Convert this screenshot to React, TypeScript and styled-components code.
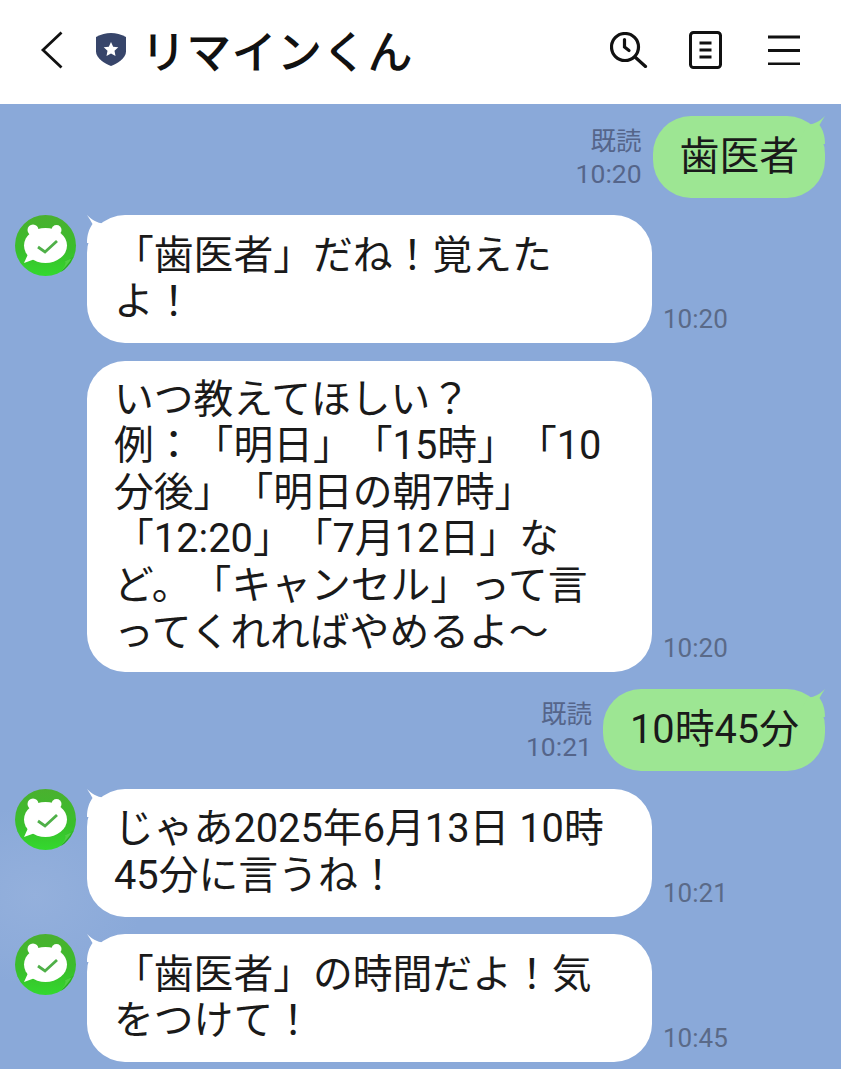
import React, { FC, ReactNode } from "react";
import styled, { createGlobalStyle } from "styled-components";

const GlobalStyle = createGlobalStyle`
  html, body {
    margin: 0;
    padding: 0;
    background: #8aa9d9;
    overflow: hidden;
  }
`;

const Screen = styled.div`
  width: 841px;
  height: 1069px;
  display: flex;
  flex-direction: column;
  overflow: hidden;
  background: radial-gradient(ellipse 110px 90px at 35px 895px, #94b0dc, #8aa9d9 100%);
  font-family: Roboto, "Noto Sans CJK JP", sans-serif;
  text-spacing-trim: space-all;
`;

const Header = styled.header`
  height: 104px;
  flex: none;
  background: #ffffff;
  display: flex;
  align-items: center;
  padding: 0 41px 5px 40px;
  box-sizing: border-box;
`;

const TitleGroup = styled.div`
  display: flex;
  align-items: center;
  flex: 1;
  gap: 14px;
`;

const Title = styled.h1`
  margin: 0;
  font-family: "Noto Sans CJK JP", sans-serif;
  font-size: 45px;
  font-weight: 500;
  line-height: 60px;
  letter-spacing: 0.3px;
  color: #111111;
`;

const HeaderActions = styled.div`
  display: flex;
  align-items: center;
  gap: 41px;
`;

const BackSvg = styled.svg`
  flex: none;
`;

const ShieldSvg = styled.svg`
  flex: none;
  margin-left: 17px;
`;

const Feed = styled.main`
  display: flex;
  flex-direction: column;
  padding: 12px 16px 0 15px;
`;

const Row = styled.div<{ $out?: boolean }>`
  display: flex;
  align-items: flex-end;
  justify-content: ${(p) => (p.$out ? "flex-end" : "flex-start")};
  margin-bottom: 17.5px;
`;

const AvatarSlot = styled.div`
  width: 72px;
  flex: none;
  align-self: flex-start;
  height: 62px;
`;

const Bubble = styled.div<{ $out?: boolean; $long?: boolean }>`
  position: relative;
  box-sizing: border-box;
  font-size: 39.8px;
  line-height: 46.6px;
  color: #1a1a1a;
  white-space: nowrap;
  padding: ${(p) => (p.$long ? "15.8px" : "17.5px")} ${(p) => (p.$out ? "26px 17.5px 27px" : "27px")};
  border-radius: 38px;
  background: ${(p) => (p.$out ? "#9de693" : "#ffffff")};
  ${(p) => (p.$out ? "" : "width: 565px;")}
`;

const BubbleText = styled.div`
  position: relative;
`;

const Tail = styled.svg<{ $out?: boolean }>`
  position: absolute;
  top: 0;
  ${(p) => (p.$out ? "right: 0; transform: scaleX(-1);" : "left: 0;")}
`;

const Stamp = styled.div`
  margin: 0 0 8px 11px;
  font-size: 26px;
  line-height: 32px;
  color: #5a6a88;
`;

const OutMeta = styled.div`
  margin: 0 11px 6px 0;
  text-align: right;
  font-size: 26.500px;
  line-height: 36px;
  color: #55658a;
`;

const ReadMark = styled.div`
  font-family: "Noto Sans CJK JP", sans-serif;
  font-size: 25.500px;
  line-height: 34px;
`;

const BackIcon = () => (
  <BackSvg width="24" height="38" viewBox="0 0 24 38">
    <path d="M21.500 1.500 3 19l18.500 17.500" fill="none" stroke="#111" strokeWidth="2.800" />
  </BackSvg>
);

const ShieldIcon = () => (
  <ShieldSvg width="32" height="35" viewBox="0 0 32 35">
    <path d="M1 5C6 2.500 11 1 16 1s10 1.500 15 4v14.500C31 26.500 22 31.500 16 34 10 31.500 1 26.500 1 19.500z" fill="#37456a" />
    <path d="m16 10 2.200 4.700 5.100.6-3.800 3.500 1 5.100-4.500-2.500-4.500 2.500 1-5.100-3.800-3.500 5.100-.6z" fill="#fff" />
  </ShieldSvg>
);

const ClockSearchIcon = () => (
  <svg width="38" height="36" viewBox="0 0 38 36" fill="none" stroke="#111" strokeWidth="3.200" strokeLinecap="round">
    <circle cx="15" cy="15" r="13.500" />
    <path d="M14.500 7.500v7.500l4.500 3.500" />
    <path d="m25 25 10.500 9.500" />
  </svg>
);

const MemoIcon = () => (
  <svg width="33" height="38" viewBox="0 0 33 38" fill="none" stroke="#111" strokeWidth="3" strokeLinejoin="round">
    <rect x="1.500" y="1.500" width="30" height="35" rx="3" />
    <path d="M10.500 12h12M10.500 19h12M10.500 26h12" />
  </svg>
);

const MenuIcon = () => (
  <svg width="37" height="30" viewBox="0 0 37 30" fill="none" stroke="#111" strokeWidth="3">
    <path d="M5 2h32M5 15.500h32M5 29h32" />
  </svg>
);

const BotAvatar: FC<{ id: string }> = ({ id }) => (
  <svg width="62" height="62" viewBox="0 0 62 62">
    <defs>
      <linearGradient id={id} x1="0" y1="0" x2="0" y2="1">
        <stop offset="0" stopColor="#4ab02f" />
        <stop offset="0.6" stopColor="#39bf2b" />
        <stop offset="1" stopColor="#33d92e" />
      </linearGradient>
    </defs>
    <circle cx="30.500" cy="30.500" r="30.500" fill={`url(#${id})`} />
    <circle cx="18" cy="15" r="5.500" fill="#fff" />
    <circle cx="41.500" cy="15" r="5" fill="#fff" />
    <ellipse cx="30.500" cy="30.500" rx="21.500" ry="17.500" fill="#fff" />
    <path d="m9 48 11-4-6-7z" fill="#fff" />
    <path d="m23 32 7 5 12-11" fill="none" stroke="#4fb048" strokeWidth="2.800" />
    <path d="M46 57c5-3 9-8 12-15-3 2-5 3-8 4 1 4-1 8-4 11z" fill="#2aa526" />
    <path d="M46 56c3-3 5-7 4-10 3-1 5-2 7-3-3 5-7 10-11 13z" fill="#4fd042" />
  </svg>
);

const BubbleTail: FC<{ out?: boolean; fill: string }> = ({ out, fill }) => (
  <Tail $out={out} width="28" height="28" viewBox="0 0 28 28">
    <path
      d="M0 0C2 3 4 6 5.500 9 2 14 0 20 0 28h28L17 8.500C10 8.500 4 4 0 0z"
      fill={fill}
    />
  </Tail>
);

interface IncomingProps {
  readonly avatarId?: string;
  readonly long?: boolean;
  readonly time: string;
  readonly children: ReactNode;
}

const Incoming: FC<IncomingProps> = ({ avatarId, long, time, children }) => (
  <Row>
    <AvatarSlot>{avatarId && <BotAvatar id={avatarId} />}</AvatarSlot>
    <Bubble $long={long}>
      {avatarId && <BubbleTail fill="#ffffff" />}
      <BubbleText>{children}</BubbleText>
    </Bubble>
    <Stamp>{time}</Stamp>
  </Row>
);

const Outgoing: FC<{ time: string; children: ReactNode }> = ({ time, children }) => (
  <Row $out>
    <OutMeta>
      <ReadMark>既読</ReadMark>
      {time}
    </OutMeta>
    <Bubble $out>
      <BubbleTail out fill="#9de693" />
      <BubbleText>{children}</BubbleText>
    </Bubble>
  </Row>
);

export default function App() {
  return (
    <Screen>
      <GlobalStyle />
      <Header>
        <TitleGroup>
          <BackIcon />
          <ShieldIcon />
          <Title>リマインくん</Title>
        </TitleGroup>
        <HeaderActions>
          <ClockSearchIcon />
          <MemoIcon />
          <MenuIcon />
        </HeaderActions>
      </Header>
      <Feed>
        <Outgoing time="10:20">歯医者</Outgoing>
        <Incoming avatarId="bot-a" time="10:20">
          「歯医者」だね！覚えた
          <br />
          よ！
        </Incoming>
        <Incoming long time="10:20">
          いつ教えてほしい？
          <br />
          例：「明日」「15時」「10
          <br />
          分後」「明日の朝7時」
          <br />
          「12:20」「7月12日」な
          <br />
          ど。「キャンセル」って言
          <br />
          ってくれればやめるよ～
        </Incoming>
        <Outgoing time="10:21">10時45分</Outgoing>
        <Incoming avatarId="bot-b" time="10:21">
          じゃあ2025年6月13日 10時
          <br />
          45分に言うね！
        </Incoming>
        <Incoming avatarId="bot-c" time="10:45">
          「歯医者」の時間だよ！気
          <br />
          をつけて！
        </Incoming>
      </Feed>
    </Screen>
  );
}
